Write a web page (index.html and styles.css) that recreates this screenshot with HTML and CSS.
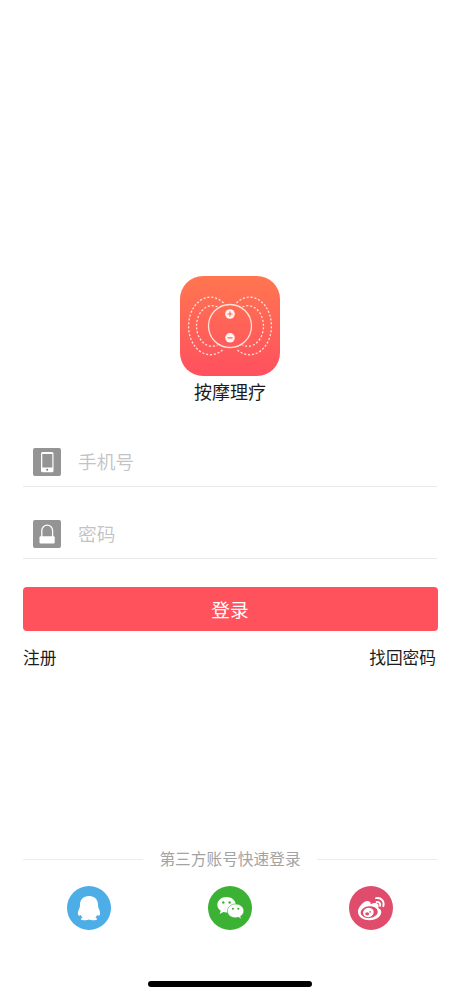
FILE: index.html
```html
<!DOCTYPE html>
<html lang="zh-CN">
<head>
<meta charset="utf-8">
<title>按摩理疗</title>
<link rel="stylesheet" href="styles.css">
</head>
<body>
<main class="screen">
  <header class="brand">
    <svg class="logo" viewBox="0 0 100 100">
      <defs><linearGradient id="g" x1="0" y1="0" x2="0" y2="1"><stop offset="0" stop-color="#ff7650"/><stop offset="1" stop-color="#ff505f"/></linearGradient></defs>
      <rect width="100" height="100" rx="23" fill="url(#g)"/>
      <g fill="none" stroke="#ffe3dc" stroke-width="1.3">
        <circle cx="50" cy="50" r="21.5"/>
        <g stroke-dasharray="2.1 1.8">
          <path d="M43.500 27A21.800 28.800 0 1 0 43.500 73"/>
          <path d="M37.500 31A15.500 20.300 0 1 0 37.500 69"/>
          <path d="M56.500 27A21.800 28.800 0 1 1 56.500 73"/>
          <path d="M62.500 31A15.500 20.300 0 1 1 62.500 69"/>
        </g>
      </g>
      <g fill="#fff4f0"><circle cx="50" cy="38" r="4.800"/><circle cx="50" cy="61.800" r="4.800"/></g>
      <path d="M47.500 38h5M50 35.500v5M47.500 61.800h5" stroke="#ff655a" stroke-width="1.200"/>
    </svg>
    <h1 class="title">按摩理疗</h1>
  </header>
  <form class="form">
    <div class="field">
      <svg class="field-icon" viewBox="0 0 28 28">
        <rect width="28" height="28" rx="2" fill="#949494"/>
        <rect x="8" y="4" width="12.500" height="20.300" rx="1.500" fill="#fff"/>
        <path d="M9.300 6h10v13.500h-10z" fill="#949494"/>
        <circle cx="14.200" cy="21.800" r="1" fill="#777"/>
      </svg>
      <span class="placeholder">手机号</span>
    </div>
    <div class="field">
      <svg class="field-icon" viewBox="0 0 28 28">
        <rect width="28" height="28" rx="2" fill="#949494"/>
        <path d="M8.800 17v-6.500a5.400 5.400 0 0 1 10.800 0V17" fill="none" stroke="#fff" stroke-width="1.300"/>
        <rect x="6.500" y="16.300" width="15.200" height="7.200" rx="1" fill="#fff"/>
      </svg>
      <span class="placeholder">密码</span>
    </div>
    <button class="submit" type="button">登录</button>
    <div class="links"><span>注册</span><span>找回密码</span></div>
  </form>
  <section class="social">
    <div class="divider"><span>第三方账号快速登录</span></div>
    <div class="providers">
      <svg class="provider" viewBox="0 0 44 44">
        <circle cx="22" cy="22" r="22" fill="#4dade7"/>
        <path d="M22 10c-5.800 0-9 3.700-9 8.600 0 1.700-.2 2.700-.8 4.100-1 2-1.600 4-1.200 5.900.3 1.400 1.700 1.300 2.900.3.300 1 .9 1.900 1.700 2.600-1.300.5-2 1.300-1.600 2.100.6 1 6.200 1 8 0 1.800 1 7.400 1 8 0 .4-.8-.3-1.600-1.600-2.100.8-.7 1.400-1.600 1.700-2.600 1.200 1 2.600 1.100 2.900-.3.400-1.900-.2-3.900-1.200-5.900-.6-1.400-.8-2.400-.8-4.100C31 13.700 27.800 10 22 10z" fill="#fff"/>
      </svg>
      <svg class="provider" viewBox="0 0 44 44">
        <circle cx="22" cy="22" r="22" fill="#3bb233"/>
        <path d="M18.500 11C13.500 11 9.300 14.400 9.300 18.800c0 2.500 1.300 4.600 3.400 6l-1 3.300 3.600-2c1 .3 2.100.5 3.200.5 5.100 0 9.300-3.500 9.300-7.800S23.600 11 18.500 11z" fill="#fff"/>
        <path d="M27.600 18c-4.500 0-8.200 3.100-8.200 6.900 0 3.900 3.700 6.900 8.200 6.900 1 0 2-.2 2.900-.5l2.900 1.800-.8-2.900c2-1.300 3.200-3.200 3.200-5.300 0-3.800-3.700-6.900-8.200-6.900z" fill="#fff" stroke="#3bb233" stroke-width=".6"/>
        <g fill="#3bb233"><circle cx="15.300" cy="16.500" r="1.200"/><circle cx="21.600" cy="16.500" r="1.200"/><circle cx="24.900" cy="22.800" r="1.050"/><circle cx="30.300" cy="22.800" r="1.050"/></g>
      </svg>
      <svg class="provider" viewBox="0 0 44 44">
        <circle cx="22" cy="22" r="22" fill="#df4c6c"/>
        <path d="M20.200 15.600c-2.100-1.700-6.100.7-8.800 4.100-1.700 2.100-2.500 4.200-2.500 6.100 0 5 5.600 8.500 11.700 8.500 6.800 0 11.700-4.100 11.700-8.200 0-2.100-1.300-3.500-3.100-4.200.8-2.300.5-3.800-1-4.500-1.500-.7-3.800-.4-6.600.8.2-1.200 0-2-1.400-2.600z" fill="#fff"/>
        <ellipse cx="20.200" cy="26.200" rx="8.600" ry="5.900" transform="rotate(-7 20.200 26.200)" fill="#df4c6c"/>
        <ellipse cx="19.400" cy="26.500" rx="5.400" ry="4.700" transform="rotate(-18 19.400 26.500)" fill="#fff"/>
        <ellipse cx="18.200" cy="27.800" rx="1.900" ry="1.600" fill="#df4c6c"/><circle cx="21.100" cy="25.900" r=".8" fill="#df4c6c"/>
        <path d="M27 12.200c4.800-1.200 8.800 3.200 7.300 8M27.600 16c2.400-.6 4.300 1.500 3.500 3.800" fill="none" stroke="#fff" stroke-width="1.900" stroke-linecap="round"/>
      </svg>
    </div>
  </section>
  <div class="home-indicator"></div>
</main>
</body>
</html>
```
FILE: styles.css
```css
* { box-sizing: border-box; }
body {
  margin: 0;
  background: #fff;
  color: #1c1c1c;
  font-family: "Noto Sans CJK SC", sans-serif;
}
.screen {
  display: flex;
  flex-direction: column;
  height: 996px;
  padding: 276px 23px 9px;
}
.brand { display: flex; flex-direction: column; align-items: center; }
.logo { display: block; width: 100px; height: 100px; }
.title { margin: 2px 0 0; font-size: 18px; font-weight: 400; line-height: 26px; }
.form { margin-top: 11px; }
.field {
  display: flex;
  align-items: center;
  gap: 17px;
  height: 72px;
  padding: 22px 10px 0;
  border-bottom: 1px solid #e9e9e9;
}
.field-icon { width: 28px; height: 28px; }
.placeholder { padding-bottom: 2px; color: #c3c3c5; font-size: 18.7px; font-weight: 350; line-height: 28px; }
.submit {
  display: block;
  width: 415px;
  height: 44px;
  margin: 28px 0 0;
  padding: 0 1px 0 0;
  border: 0;
  border-radius: 4px;
  background: #ff525d;
  color: #fff;
  font: 400 18.7px/44px "Noto Sans CJK SC", sans-serif;
}
.links {
  display: flex;
  justify-content: space-between;
  margin-top: 14px;
  padding-right: 1px;
  font-size: 16.7px;
  line-height: 24px;
}
.social { margin-top: auto; }
.divider {
  display: flex;
  align-items: center;
  gap: 16px;
  color: #a3a3a3;
  font-size: 15.7px;
  line-height: 24px;
}
.divider::before, .divider::after { content: ""; flex: 1; height: 1px; background: #ececec; }
.providers { display: flex; justify-content: space-between; margin-top: 15px; padding: 0 44px; }
.provider { width: 44px; height: 44px; }
.home-indicator {
  width: 164px;
  height: 6px;
  margin: 51px auto 0;
  border-radius: 3px;
  background: #000;
}
```
